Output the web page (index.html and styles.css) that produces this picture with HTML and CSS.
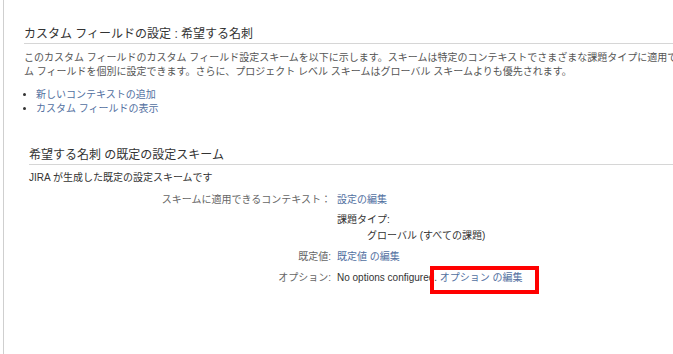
FILE: index.html
```html
<!DOCTYPE html>
<html lang="ja">
<head>
    <meta charset="UTF-8">
    <meta name="viewport" content="width=device-width, initial-scale=1.0">
    <title>カスタム フィールドの設定</title>
    <link rel="stylesheet" href="styles.css">
</head>
<body>
    <div class="page">
        <div class="content">
            <h2 class="page-title">カスタム フィールドの設定 : 希望する名刺</h2>
            <p class="intro">このカスタム フィールドのカスタム フィールド設定スキームを以下に示します。スキームは特定のコンテキストでさまざまな課題タイプに適用できるため、カスタム フィールドを個別に設定できます。さらに、プロジェクト レベル スキームはグローバル スキームよりも優先されます。</p>
            <ul class="actions">
                <li><a href="#">新しいコンテキストの追加</a></li>
                <li><a href="#">カスタム フィールドの表示</a></li>
            </ul>

            <div class="scheme">
                <h3 class="scheme-title">希望する名刺 の既定の設定スキーム</h3>
                <p class="scheme-desc">JIRA が生成した既定の設定スキームです</p>

                <div class="scheme-table">
                    <div class="label">スキームに適用できるコンテキスト：</div>
                    <div class="value"><a href="#">設定の編集</a></div>

                    <div class="label"></div>
                    <div class="value issue-types">
                        <div>課題タイプ:</div>
                        <div class="indent">グローバル (すべての課題)</div>
                    </div>

                    <div class="label">既定値:</div>
                    <div class="value"><a href="#">既定値 の編集</a></div>

                    <div class="label">オプション:</div>
                    <div class="value">No options configured. <a href="#" class="marked">オプション の編集</a></div>
                </div>
            </div>
        </div>
    </div>
</body>
</html>
```

FILE: styles.css
```css
body {
    margin: 0;
    padding: 0;
    background: #fff;
    font-family: "Liberation Sans", "Noto Sans CJK JP", sans-serif;
    color: #444;
    overflow: hidden;
}
.page {
    margin-left: 3px;
    border-left: 1px solid #cfcfcf;
    height: 354px;
}
.content {
    width: 738px;
    padding-left: 20px;
    padding-top: 26px;
}
a {
    color: #52709f;
    text-decoration: none;
}
.page-title {
    margin: 0;
    font-size: 12px;
    font-weight: normal;
    line-height: 16px;
    color: #333;
    padding-bottom: 1px;
    border-bottom: 1px solid #d6d6d6;
}
.intro {
    margin: 7px 0 0;
    font-size: 10px;
    line-height: 14px;
    color: #555;
}
.actions {
    margin: 9px 0 0;
    padding-left: 12px;
    font-size: 10px;
    line-height: 13.5px;
}
.actions li::marker {
    color: #333;
}
.scheme {
    margin: 32px 0 0 5px;
}
.scheme-title {
    margin: 0;
    font-size: 12px;
    font-weight: normal;
    line-height: 16px;
    color: #333;
    padding-bottom: 1px;
    border-bottom: 1px solid #d6d6d6;
}
.scheme-desc {
    margin: 6px 0 0;
    font-size: 10px;
    line-height: 14px;
    color: #333;
}
.scheme-table {
    display: grid;
    grid-template-columns: 302px 1fr;
    column-gap: 6px;
    row-gap: 7px;
    margin-top: 8px;
    font-size: 10px;
    line-height: 14px;
}
.label {
    text-align: right;
    color: #666;
}
.value {
    color: #333;
}
.issue-types {
    line-height: 15.5px;
    margin-top: -2px;
}
.indent {
    padding-left: 30px;
}
.marked {
    position: relative;
}
.marked::after {
    content: "";
    position: absolute;
    left: -10px;
    top: -6px;
    right: -16px;
    bottom: -11px;
    border: 4px solid #f00;
}
```
